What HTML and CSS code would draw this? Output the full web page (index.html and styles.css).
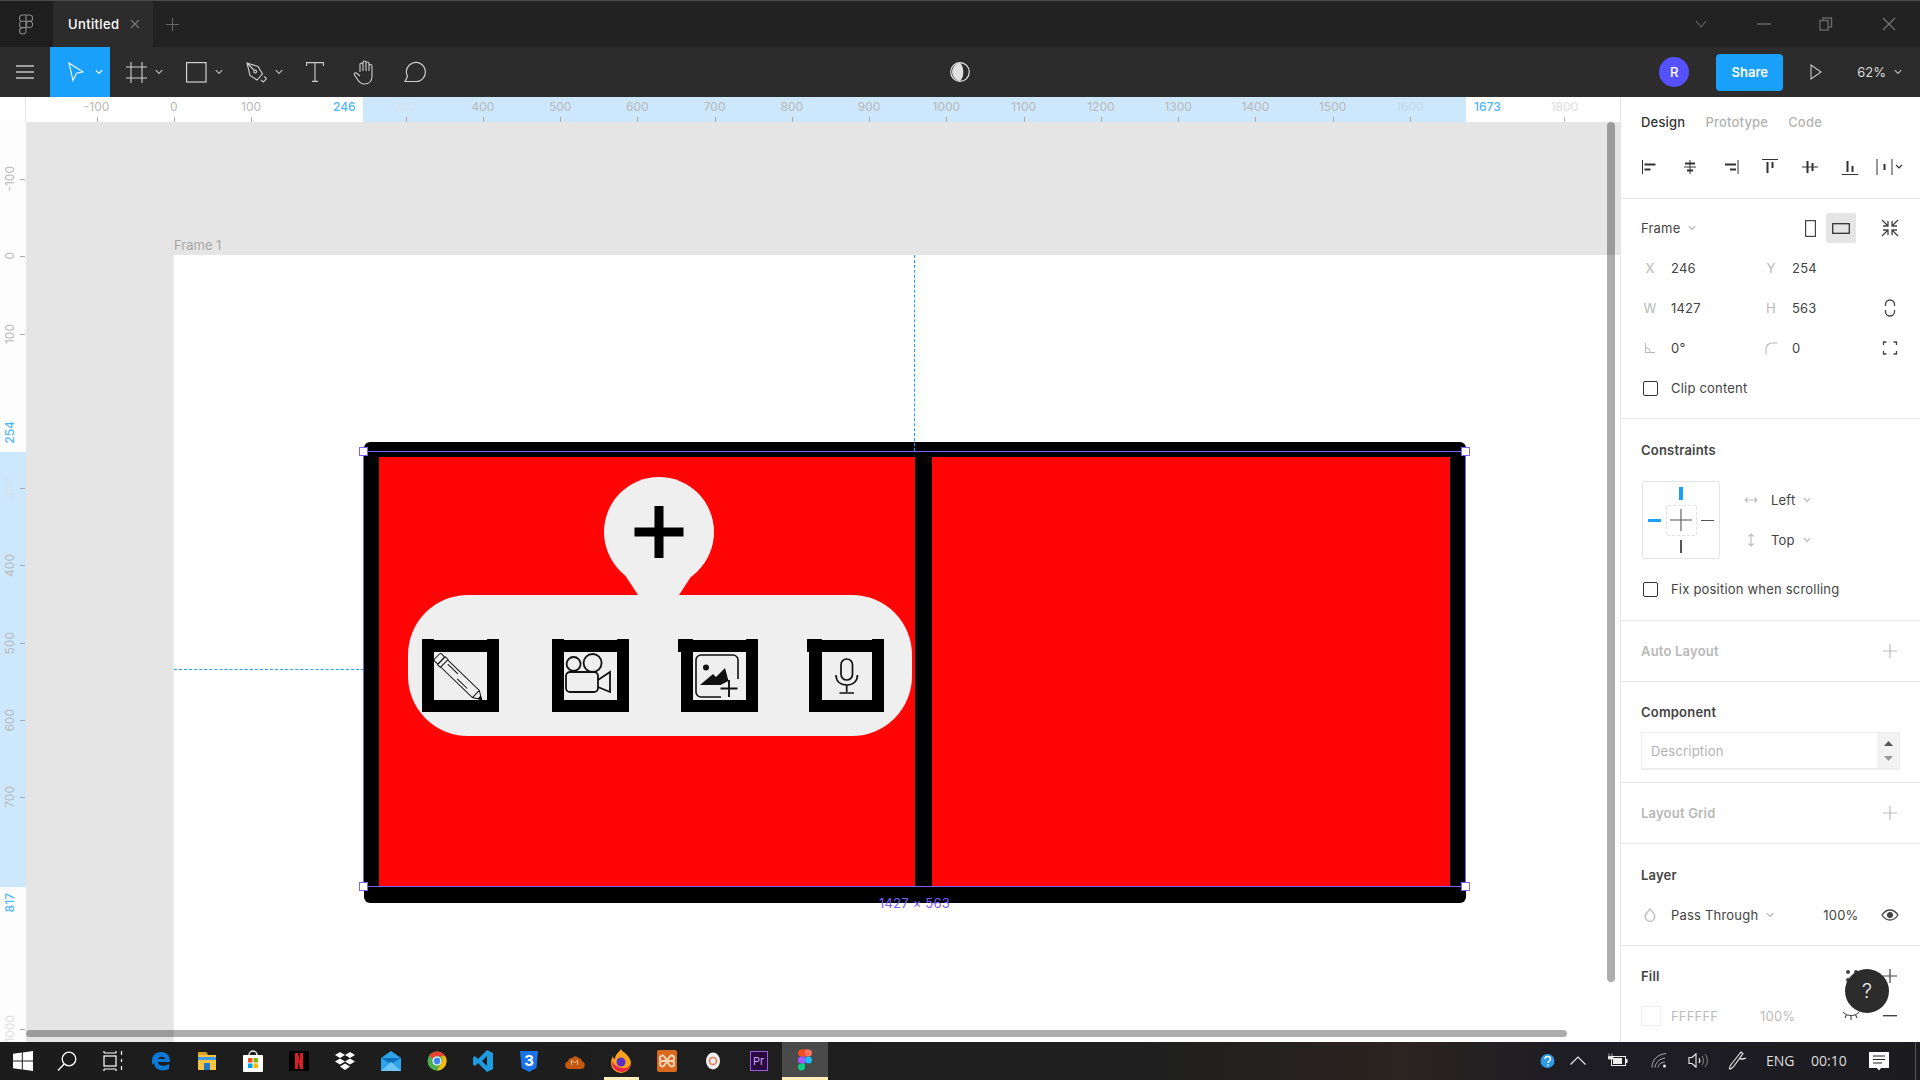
FILE: index.html
```html
<!DOCTYPE html>
<html lang="en">
<head>
  <meta charset="UTF-8">
  <title>Untitled - Figma</title>
  <link rel="stylesheet" href="styles.css">
</head>
<body>

  <svg class="defs" width="0" height="0">
    <symbol id="chev" viewBox="0 0 8 6"><path d="M.8 1.2 4 4.4l3.2-3.2" fill="none" stroke="currentColor" stroke-width="1.1"/></symbol>
    <symbol id="plus" viewBox="0 0 14 14"><path d="M7 0v14M0 7h14" fill="none" stroke="currentColor" stroke-width="1.2"/></symbol>
  </svg>

  <!-- title bar -->
  <div class="titlebar">
    <div class="logo-cell">
      <svg width="14" height="21" viewBox="0 0 14 21" fill="none" stroke="#8a8a8a" stroke-width="1.1"><path d="M7 1H3.6a3.1 3.1 0 0 0 0 6.3H7zM7 1h3.4a3.1 3.1 0 0 1 0 6.3H7zM7 7.3H3.6a3.1 3.1 0 0 0 0 6.3H7zM7 13.6H3.6A3.2 3.2 0 1 0 7 16.8z"/><circle cx="10.4" cy="10.5" r="3.2"/></svg>
    </div>
    <div class="file-tab">
      <span>Untitled</span>
      <svg width="10" height="10" viewBox="0 0 10 10" stroke="#777" stroke-width="1.2"><path d="M1 1l8 8M9 1l-8 8"/></svg>
    </div>
    <div class="new-tab"><svg width="13" height="13" class="plus-dark"><use href="#plus"/></svg></div>
    <div class="window-controls">
      <div><svg width="12" height="8" viewBox="0 0 12 8" fill="none" stroke="#666" stroke-width="1.1"><path d="M1 1l5 6 5-6"/></svg></div>
      <div><svg width="14" height="2"><rect width="14" height="2" fill="#555"/></svg></div>
      <div><svg width="14" height="14" viewBox="0 0 14 14" fill="none" stroke="#666" stroke-width="1.4"><rect x="1" y="3.5" width="8" height="9.5"/><path d="M4 3V1h8.5v9H9"/></svg></div>
      <div><svg width="14" height="14" viewBox="0 0 14 14" stroke="#777" stroke-width="1.1"><path d="M1 1l12 12M13 1L1 13"/></svg></div>
    </div>
  </div>

  <!-- toolbar -->
  <div class="toolbar">
    <div class="tools">
      <div class="tool">
        <svg width="18" height="16" viewBox="0 0 18 16" stroke="#c4c4c4" stroke-width="1.3"><path d="M0 2h18M0 8h18M0 14h18"/></svg>
      </div>
      <div class="tool tool-wide tool-active">
        <svg width="16" height="20" viewBox="0 0 16 20" fill="none" stroke="#fff" stroke-width="1.1"><path d="M1 1l14 9-6.5 1.2L5 18.5z"/></svg>
        <svg class="chev" width="8" height="6"><use href="#chev"/></svg>
      </div>
      <div class="tool tool-wide">
        <svg width="21" height="21" viewBox="0 0 21 21" stroke="#d0d0d0" stroke-width="1.1"><path d="M0 5h21M0 16h21M5 0v21M16 0v21"/></svg>
        <svg class="chev" width="8" height="6"><use href="#chev"/></svg>
      </div>
      <div class="tool tool-wide">
        <svg width="21" height="21" viewBox="0 0 21 21" fill="none" stroke="#d0d0d0" stroke-width="1.2"><rect x=".6" y=".6" width="19.4" height="19.4"/></svg>
        <svg class="chev" width="8" height="6"><use href="#chev"/></svg>
      </div>
      <div class="tool tool-wide">
        <svg width="21" height="21" viewBox="0 0 21 21" fill="none" stroke="#d0d0d0" stroke-width="1.1"><path d="M1 1l11 3.5 4.5 7.5-5.5 6-7-4.5zM1 1l7 7"/><circle cx="9.2" cy="9.5" r="1.4"/><path d="M15 18l2.500 2 3-3.500-2.500-2.200"/></svg>
        <svg class="chev" width="8" height="6"><use href="#chev"/></svg>
      </div>
      <div class="tool">
        <svg width="18" height="20" viewBox="0 0 18 20" fill="none" stroke="#d0d0d0" stroke-width="1.1"><path d="M.6 4V.6h16.800V4M9 .6v18.800M6 19.400h6"/></svg>
      </div>
      <div class="tool">
        <svg width="23" height="25" viewBox="0 0 23 25" fill="none" stroke="#d0d0d0" stroke-width="1.1"><path d="M7 12V4.500a1.500 1.500 0 0 1 3 0V11M10 10V2.500a1.500 1.500 0 0 1 3 0V11M13 10.500V3.500a1.500 1.500 0 0 1 3 0V11M16 11V6a1.500 1.500 0 0 1 3 0v10c0 5-3 8-7.500 8-4 0-5.500-2-7-4.500L1.500 15c-1-2 1-3 2.500-1.500L7 16"/></svg>
      </div>
      <div class="tool">
        <svg width="22" height="22" viewBox="0 0 22 22" fill="none" stroke="#d0d0d0" stroke-width="1.2"><path d="M3.500 15.500A9.500 9.500 0 1 1 12 20.500H1z"/></svg>
      </div>
    </div>
    <div class="contrast">
      <svg width="20" height="20" viewBox="0 0 20 20"><circle cx="10" cy="10" r="9.300" fill="none" stroke="#e6e6e6" stroke-width="1.2"/><path d="M11 .8a9.300 9.300 0 0 0 0 18.400c2.500-2.500 3.300-5.700 3.300-9.200S13.500 3.300 11 .8z" transform="translate(-1 0)" fill="#e0e0e0"/></svg>
    </div>
    <div class="toolbar-right">
      <div class="avatar">R</div>
      <div class="share">Share</div>
      <svg class="play" width="12" height="16" viewBox="0 0 12 16" fill="none" stroke="#c4c4c4" stroke-width="1.1"><path d="M1 1l10 7-10 7z"/></svg>
      <div class="zoom-level">62%</div>
      <svg class="chev zoom-chev" width="8" height="6"><use href="#chev"/></svg>
    </div>
  </div>

  <div class="main">
    <div class="workspace">

      <!-- top ruler -->
      <div class="ruler-top">
        <div class="band-top"></div>
        <div class="corner"></div>
        <div class="tick"><span>-100</span></div>
        <div class="tick"><span>0</span></div>
        <div class="tick"><span>100</span></div>
        <div class="tick no-tick"></div>
        <div class="tick tick-faint"><span>300</span></div>
        <div class="tick"><span>400</span></div>
        <div class="tick"><span>500</span></div>
        <div class="tick"><span>600</span></div>
        <div class="tick"><span>700</span></div>
        <div class="tick"><span>800</span></div>
        <div class="tick"><span>900</span></div>
        <div class="tick"><span>1000</span></div>
        <div class="tick"><span>1100</span></div>
        <div class="tick"><span>1200</span></div>
        <div class="tick"><span>1300</span></div>
        <div class="tick"><span>1400</span></div>
        <div class="tick"><span>1500</span></div>
        <div class="tick tick-faint tick-edge"><span>1600</span></div>
        <div class="tick no-tick"></div>
        <div class="tick tick-pale"><span>1800</span></div>
        <span class="mark mark-x1">246</span>
        <span class="mark mark-x2">1673</span>
      </div>

      <div class="stage">
        <!-- left ruler -->
        <div class="ruler-left">
          <div class="band-left"></div>
          <div class="vtick"><span>-100</span></div>
          <div class="vtick"><span>0</span></div>
          <div class="vtick"><span>100</span></div>
          <div class="vtick no-tick"></div>
          <div class="vtick tick-faint"><span>300</span></div>
          <div class="vtick"><span>400</span></div>
          <div class="vtick"><span>500</span></div>
          <div class="vtick"><span>600</span></div>
          <div class="vtick"><span>700</span></div>
          <div class="vtick no-tick"></div>
          <div class="vtick no-tick"></div>
          <div class="vtick tick-pale"><span>1000</span></div>
          <span class="vmark vmark-1">254</span>
          <span class="vmark vmark-2">817</span>
        </div>

        <div class="canvas">
          <div class="artboard">
            <div class="artboard-name">Frame 1</div>

            <div class="screen">
              <div class="screen-pane">
                <div class="add-menu">
                  <svg class="add-head" width="110" height="119" viewBox="0 0 110 119">
                    <circle cx="55" cy="56" r="55" fill="#efefef"/>
                    <path d="M19 96L34 119H75L90 96z" fill="#efefef"/>
                    <rect x="50.500" y="30" width="9" height="52"/>
                    <rect x="30.500" y="51.500" width="49" height="9"/>
                  </svg>
                  <div class="add-pill">
                    <div class="tile">
                      <svg width="53" height="48" viewBox="0 0 53 48" fill="none" stroke="#111" stroke-width="1">
                        <g transform="translate(3 4.500) rotate(44)">
                          <rect x="0" y="-5" width="6" height="10" rx="1.500"/>
                          <path d="M6-5.500h4v11H6zM10-5h44l8 5-8 5H10zM54-5v10M13-2h14M30 2h14"/>
                          <path d="M59-1.500l3 1.500-3 1.500z" fill="#111"/>
                        </g>
                      </svg>
                    </div>
                    <div class="tile">
                      <svg width="53" height="48" viewBox="0 0 53 48" fill="none" stroke="#111" stroke-width="1.800">
                        <circle cx="9.600" cy="12" r="7"/>
                        <circle cx="28.600" cy="11" r="9"/>
                        <rect x="2" y="20" width="32" height="20" rx="4"/>
                        <path d="M34 28l12-8v20l-12-5"/>
                      </svg>
                    </div>
                    <div class="tile tile-tab">
                      <svg width="53" height="48" viewBox="0 0 53 48" fill="none" stroke="#111" stroke-width="1.600">
                        <path d="M28 45H8a5 5 0 0 1-5-5V8a5 5 0 0 1 5-5h32a5 5 0 0 1 5 5v19"/>
                        <circle cx="13" cy="15.500" r="3" fill="#111" stroke="none"/>
                        <path d="M7 33l13-11 3 3 9-9 3.500 13-8 4H7z" fill="#111" stroke="none"/>
                        <path d="M36 28v17M27.500 36.500h17" stroke-width="1.900"/>
                      </svg>
                    </div>
                    <div class="tile tile-tab tile-last">
                      <svg width="50" height="48" viewBox="0 0 50 48" fill="none" stroke="#111" stroke-width="1.700">
                        <g transform="translate(1.500 0)">
                          <rect x="17.500" y="7" width="11.500" height="21" rx="5.700"/>
                          <path d="M12.500 23c0 6 4 10 10.700 10S34 29 34 23M23.200 33v7M16 41h14.500"/>
                        </g>
                      </svg>
                    </div>
                  </div>
                </div>
              </div>
              <div class="screen-pane screen-pane-right"></div>
            </div>

            <div class="guide-v"></div>
            <div class="guide-h"></div>

            <!-- selection box -->
            <div class="selection">
              <i class="handle handle-tl"></i>
              <i class="handle handle-tr"></i>
              <i class="handle handle-bl"></i>
              <i class="handle handle-br"></i>
            </div>
            <div class="size-label">1427 × 563</div>
          </div>

          <div class="scroll-v"></div>
          <div class="scroll-h"></div>
        </div>
      </div>
    </div>

    <!-- right panel -->
    <div class="panel">
      <div class="section section-head">
        <div class="tabs">
          <span class="tab-on">Design</span>
          <span>Prototype</span>
          <span>Code</span>
        </div>
        <div class="align-row">
          <svg width="30" height="18" viewBox="0 0 30 18" stroke="#333"><path d="M7.500 2v14" /><path d="M9.500 6.500h11M9.500 11.500h6" stroke-width="2"/></svg>
          <svg width="30" height="18" viewBox="0 0 30 18" stroke="#333"><path d="M9 9h12M15 2v14" /><path d="M10 5.500h10M12 12.500h6" stroke-width="2"/></svg>
          <svg width="30" height="18" viewBox="0 0 30 18" stroke="#333"><path d="M23 2v14"/><path d="M10 6.500h11M15 11.500h6" stroke-width="2"/></svg>
          <svg width="30" height="18" viewBox="0 0 30 18" stroke="#333"><path d="M7 1.500h16"/><path d="M12.500 4v11M17.500 4v6" stroke-width="2"/></svg>
          <svg width="30" height="18" viewBox="0 0 30 18" stroke="#333"><path d="M7 9h16"/><path d="M12.500 3v12M17.500 5v8" stroke-width="2"/></svg>
          <svg width="30" height="18" viewBox="0 0 30 18" stroke="#333"><path d="M7 16.500h16"/><path d="M12.500 3v11M17.500 8v6" stroke-width="2"/></svg>
          <svg width="30" height="18" viewBox="0 0 30 18" fill="none" stroke="#333"><path d="M2 1v16M17 1v16"/><path d="M9.500 6v6" stroke-width="2"/><path d="M21 7l3 3 3-3" stroke-width="1.200"/></svg>
        </div>
      </div>

      <div class="section section-frame">
        <div class="row">
          <span class="text">Frame</span>
          <svg class="chev-soft" width="8" height="6"><use href="#chev"/></svg>
          <div class="orient">
            <svg width="11" height="17" viewBox="0 0 11 17" fill="none" stroke="#444" stroke-width="1.200"><rect x=".6" y=".6" width="9.800" height="15.800"/></svg>
            <div class="orient-on"><svg width="18" height="11" viewBox="0 0 18 11" fill="none" stroke="#333" stroke-width="1.300"><rect x=".7" y=".7" width="16.600" height="9.600"/></svg></div>
          </div>
          <svg class="row-end" width="20" height="20" viewBox="0 0 20 20" fill="none" stroke="#444" stroke-width="1.300"><path d="M2 2l5.500 5.500M8 3v5H3M18 2l-5.500 5.500M12 3v5h5M2 18l5.500-5.500M8 17v-5H3M18 18l-5.500-5.500M12 17v-5h5"/></svg>
        </div>
        <div class="row">
          <div class="field"><span class="field-label">X</span><span class="text">246</span></div>
          <div class="field"><span class="field-label">Y</span><span class="text">254</span></div>
        </div>
        <div class="row">
          <div class="field"><span class="field-label">W</span><span class="text">1427</span></div>
          <div class="field"><span class="field-label">H</span><span class="text">563</span></div>
          <svg class="row-end" width="20" height="18" viewBox="0 0 20 18" fill="none" stroke="#444" stroke-width="1.300"><path d="M5.500 7V5.500a4.500 4.500 0 0 1 9 0V7M5.500 11v1.500a4.500 4.500 0 0 0 9 0V11"/></svg>
        </div>
        <div class="row">
          <div class="field"><span class="field-label"><svg width="12" height="12" viewBox="0 0 12 12" fill="none" stroke="#bbb" stroke-width="1.100"><path d="M1.500 1v9.500H11M1.500 5.500c2.500.3 4.500 2.500 4.700 5"/></svg></span><span class="text">0°</span></div>
          <div class="field"><span class="field-label"><svg width="13" height="13" viewBox="0 0 13 13" fill="none" stroke="#bbb" stroke-width="1.100"><path d="M1 12.500V7a6 6 0 0 1 6-6h5.500"/></svg></span><span class="text">0</span></div>
          <svg class="row-end" width="20" height="14" viewBox="0 0 20 14" fill="none" stroke="#444" stroke-width="1.300"><path d="M3.500 4V1h3M13.500 1h3v3M16.500 10v3h-3M6.500 13h-3v-3"/></svg>
        </div>
        <div class="row">
          <i class="check"></i>
          <span class="text">Clip content</span>
        </div>
      </div>

      <div class="section section-constraints">
        <div class="section-title">Constraints</div>
        <div class="constraint-body">
          <div class="constraint-box">
            <i class="cb-inner"></i>
            <i class="cb-line cb-top"></i>
            <i class="cb-line cb-left"></i>
            <i class="cb-line cb-right"></i>
            <i class="cb-line cb-bottom"></i>
            <svg class="cb-cross" width="22" height="22" viewBox="0 0 22 22" stroke="#555" stroke-width="1.100"><path d="M11 0v22M0 11h22"/></svg>
          </div>
          <div class="constraint-opts">
            <div class="opt">
              <svg width="14" height="10" viewBox="0 0 14 10" fill="none" stroke="#bbb" stroke-width="1.100"><path d="M1 5h12M3.500 2.500 1 5l2.500 2.500M10.500 2.500 13 5l-2.500 2.500"/></svg>
              <span class="text">Left</span>
              <svg class="chev-soft" width="8" height="6"><use href="#chev"/></svg>
            </div>
            <div class="opt">
              <svg width="14" height="14" viewBox="0 0 14 14" fill="none" stroke="#bbb" stroke-width="1.100"><path d="M7 1v12M4.500 3.500 7 1l2.500 2.500M4.500 10.500 7 13l2.500-2.500"/></svg>
              <span class="text">Top</span>
              <svg class="chev-soft" width="8" height="6"><use href="#chev"/></svg>
            </div>
          </div>
        </div>
        <div class="row fix-row">
          <i class="check"></i>
          <span class="text">Fix position when scrolling</span>
        </div>
      </div>

      <div class="section section-bar">
        <span class="section-title title-off">Auto Layout</span>
        <svg class="row-end plus-off" width="14" height="14"><use href="#plus"/></svg>
      </div>

      <div class="section section-component">
        <div class="section-title">Component</div>
        <div class="desc-box">
          <span>Description</span>
          <div class="spinner">
            <svg width="9" height="5" viewBox="0 0 9 5"><path d="M0 5L4.500 0 9 5z" fill="#555"/></svg>
            <svg width="9" height="5" viewBox="0 0 9 5"><path d="M0 0L4.500 5 9 0z" fill="#999"/></svg>
          </div>
        </div>
      </div>

      <div class="section section-bar">
        <span class="section-title title-off">Layout Grid</span>
        <svg class="row-end plus-off" width="14" height="14"><use href="#plus"/></svg>
      </div>

      <div class="section section-layer">
        <div class="section-title">Layer</div>
        <div class="row layer-row">
          <span class="field-label"><svg width="12" height="14" viewBox="0 0 12 14" fill="none" stroke="#bbb" stroke-width="1.300"><path d="M6 1c2 2.500 4.800 4.500 4.800 7.500a4.800 4.800 0 0 1-9.600 0C1.200 5.500 4 3.500 6 1z"/></svg></span>
          <span class="text">Pass Through</span>
          <svg class="chev-soft" width="8" height="6"><use href="#chev"/></svg>
          <span class="text layer-pct">100%</span>
          <svg class="row-end" width="18" height="12" viewBox="0 0 18 12" fill="none" stroke="#444" stroke-width="1.300"><path d="M1 6c2-3 5-5 8-5s6 2 8 5c-2 3-5 5-8 5S3 9 1 6z"/><circle cx="9" cy="6" r="2.400" fill="#444"/></svg>
        </div>
      </div>

      <div class="section section-fill">
        <div class="fill-title">
          <span class="section-title">Fill</span>
          <svg class="style-dots" width="14" height="14" viewBox="0 0 14 14" fill="#444"><circle cx="3" cy="3" r="2"/><circle cx="11" cy="3" r="2"/><circle cx="3" cy="11" r="2"/><circle cx="11" cy="11" r="2"/></svg>
          <svg class="row-end plus-on" width="14" height="14"><use href="#plus"/></svg>
        </div>
        <div class="row fill-row">
          <i class="swatch"></i>
          <span class="text text-off fill-hex">FFFFFF</span>
          <span class="text text-off">100%</span>
          <svg class="lash" width="18" height="10" viewBox="0 0 18 10" fill="none" stroke="#444" stroke-width="1.100"><path d="M1 1c2 2.500 5 3.500 8 3.500s6-1 8-3.500M4.500 3.500 3 7M9 4.500V9M13.500 3.500 15 7"/></svg>
          <svg class="row-end" width="14" height="2"><rect width="14" height="1.400" fill="#444"/></svg>
        </div>
      </div>

      <div class="help">?</div>
    </div>
  </div>

  <!-- windows taskbar -->
  <div class="taskbar">
    <div class="task-cell task-sys"><svg width="20" height="20" viewBox="0 0 20 20" fill="#fff"><path d="M0 2.800l8.800-1.200v8H0zM9.800 1.400 20 0v9.600H9.800zM0 10.600h8.800v7.900L0 17.300zM9.800 10.600H20V20l-10.200-1.400z"/></svg></div>
    <div class="task-cell task-sys"><svg width="20" height="20" viewBox="0 0 20 20" fill="none" stroke="#fff" stroke-width="1.300"><circle cx="12" cy="8" r="6.800"/><path d="M7.200 13 1 19.500"/></svg></div>
    <div class="task-cell task-sys"><svg width="20" height="20" viewBox="0 0 20 20" fill="none" stroke="#fff" stroke-width="1.200"><rect x="1" y="5" width="12" height="10"/><path d="M1 2h12M1 18h12M1 0v2M13 0v2M1 18v2M13 18v2M18.500 0v4M18.500 8v3M18.500 15v4"/></svg></div>
    <div class="task-cell task-first"><svg width="20" height="20" viewBox="0 0 20 20"><path d="M1 10C1 4 5 1 10 1c6 0 9 4 9 10H7c0 4 6 5 11 2v5c-6 3-15 1-15-6-2 2-2 3-2-2z" fill="#0d78d6"/><path d="M7 8h7c0-3-6-3-7 0z" fill="#202020"/></svg></div>
    <div class="task-cell"><svg width="20" height="20" viewBox="0 0 20 20"><path d="M1 1h8l2 3h8v15H1z" fill="#f6c343"/><path d="M1 1h8l2 3H1z" fill="#d9a128"/><rect x="1" y="6" width="18" height="3" fill="#3d9ae8"/><rect x="7" y="12" width="6" height="7" fill="#2478c8"/></svg></div>
    <div class="task-cell"><svg width="20" height="22" viewBox="0 0 20 22"><path d="M6 5a4 4 0 0 1 8 0" fill="none" stroke="#eee" stroke-width="1.400"/><rect y="5" width="20" height="17" rx="1" fill="#fff"/><rect x="5" y="8" width="4.500" height="4.500" fill="#f25022"/><rect x="10.500" y="8" width="4.500" height="4.500" fill="#7fba00"/><rect x="5" y="13.500" width="4.500" height="4.500" fill="#00a4ef"/><rect x="10.500" y="13.500" width="4.500" height="4.500" fill="#ffb900"/></svg></div>
    <div class="task-cell"><svg width="20" height="20" viewBox="0 0 20 20"><rect width="20" height="20" fill="#000"/><path d="M6 2h3l2 8V2h3v16h-3L9 10v8H6z" fill="#d81f26"/></svg></div>
    <div class="task-cell"><svg width="20" height="18" viewBox="0 0 20 18" fill="#fff"><path d="M5 0l5 3-5 3-5-3zM15 0l5 3-5 3-5-3zM5 6.500l5 3-5 3-5-3zM15 6.500l5 3-5 3-5-3zM10 11.500l5 3-5 3.500-5-3.500z"/></svg></div>
    <div class="task-cell"><svg width="20" height="20" viewBox="0 0 20 20"><path d="M0 7 10 0l10 7v13H0z" fill="#2ba4ea"/><path d="M0 7h20L10 13z" fill="#0f6fb8"/><path d="M0 20 10 11l10 9z" fill="#6cc6f5"/></svg></div>
    <div class="task-cell"><svg width="20" height="20" viewBox="0 0 20 20"><circle cx="10" cy="10" r="9.500" fill="#4caf50"/><path d="M10 .5a9.500 9.500 0 0 1 8.300 4.800H10a4.800 4.800 0 0 0-4.500 3L2.600 4A9.500 9.500 0 0 1 10 .5z" fill="#ea4335"/><path d="M18.300 5.300A9.500 9.500 0 0 1 10 19.500l4.200-7.200A4.800 4.800 0 0 0 14 5.300z" fill="#fbbc05"/><circle cx="10" cy="10" r="4" fill="#4285f4" stroke="#fff" stroke-width="1.200"/></svg></div>
    <div class="task-cell"><svg width="20" height="22" viewBox="0 0 20 22"><path d="M14 0l6 3v16l-6 3L5 13l-3 3-2-1.500V7.500L2 6l3 3zM14 6l-5 5 5 5z" fill="#1f9ce0"/></svg></div>
    <div class="task-cell"><svg width="18" height="21" viewBox="0 0 18 21"><path d="M0 0h18l-1.600 17L9 21l-7.400-4z" fill="#1b73e8"/><text x="9" y="15" class="css-three">3</text></svg></div>
    <div class="task-cell"><svg width="20" height="16" viewBox="0 0 20 16"><path d="M4 16a4 4 0 0 1-1-7.800 4 4 0 0 1 4-3.200 4 4 0 0 1 6.500 0 4 4 0 0 1 3.500 3.200A4 4 0 0 1 16 16z" fill="#c4580f"/><path d="M6.500 12V7l3 3 3-3v5" fill="none" stroke="#f0c090" stroke-width="1"/></svg></div>
    <div class="task-cell"><svg width="20" height="24" viewBox="0 0 20 24"><path d="M10 0c1 3 4 3 6 6 3 3 4 6 4 8a10 10 0 0 1-20 0c0-3 1-5 2-7 0 2 1 3 2 3 0-4 3-6 6-10z" fill="#f9a21a"/><path d="M10 23a10 10 0 0 0 10-9c-2 5-6 6-10 5S3 16 1 12a10 10 0 0 0 9 11z" fill="#e8244a"/><circle cx="10" cy="13" r="4.500" fill="#5a2fc2"/></svg></div>
    <div class="task-cell"><svg width="20" height="22" viewBox="0 0 20 22"><rect width="20" height="22" rx="2" fill="#d9691f"/><path d="M10 11C8 7 7 5.500 5.500 5.500a2.500 2.500 0 0 0 0 5.500zM10 11c2-4 3-5.500 4.500-5.500a2.500 2.500 0 0 1 0 5.500zM10 11c-2 4-3 5.500-4.500 5.500a2.500 2.500 0 0 1 0-5.500zM10 11c2 4 3 5.500 4.500 5.500a2.500 2.500 0 0 0 0-5.500z" fill="none" stroke="#f6d9b8" stroke-width="1.800"/></svg></div>
    <div class="task-cell"><svg width="14" height="18" viewBox="0 0 14 18"><ellipse cx="7" cy="9" rx="7" ry="8.500" fill="#eee"/><circle cx="7" cy="9" r="3.500" fill="none" stroke="#e77a50" stroke-width="1.600"/></svg></div>
    <div class="task-cell"><svg width="18" height="20" viewBox="0 0 18 20"><rect width="18" height="20" fill="#2a0a3d"/><rect x=".5" y=".5" width="17" height="19" fill="none" stroke="#9a5be0"/><text x="3" y="14" class="pr-label">Pr</text></svg></div>
    <div class="task-cell task-figma"><svg width="14" height="24" viewBox="0 0 14 21"><path d="M7 0H3.500a3.500 3.500 0 0 0 0 7H7z" fill="#f24e1e"/><path d="M7 0h3.500a3.500 3.500 0 0 1 0 7H7z" fill="#ff7262"/><path d="M7 7H3.500a3.500 3.500 0 0 0 0 7H7z" fill="#a259ff"/><circle cx="10.500" cy="10.500" r="3.500" fill="#1abcfe"/><path d="M7 14H3.500A3.500 3.500 0 1 0 7 17.500z" fill="#0acf83"/></svg></div>
    <i class="task-line task-line-fox"></i>

    <div class="tray">
      <svg class="tray-help" width="16" height="16" viewBox="0 0 16 16"><circle cx="7.500" cy="8" r="7" fill="#2e9be6"/><path d="M5 6c0-3.500 5.500-3.500 5.500 0 0 2-2.500 2-2.500 4M8 11.500v1.500" fill="none" stroke="#fff" stroke-width="1.500"/></svg>
      <svg class="tray-up" width="16" height="9" viewBox="0 0 16 9" fill="none" stroke="#eee" stroke-width="1.100"><path d="M.5 8.500 8 1l7.500 7.500"/></svg>
      <svg class="tray-battery" width="20" height="13" viewBox="0 0 20 13"><path d="M1 .5v3M4 .5v3M0 3.500h5v2.500H0z" fill="#eee" stroke="#eee" stroke-width=".7"/><rect x="3.500" y="3.500" width="14" height="9" fill="none" stroke="#eee"/><rect x="5" y="5" width="9" height="6" fill="#eee"/><rect x="18" y="6" width="1.500" height="4" fill="#eee"/></svg>
      <svg class="tray-wifi" width="16" height="15" viewBox="0 0 16 15" fill="none" stroke="#aaa" stroke-width="1"><path d="M1 14.500C1 7 6 1.500 15 .5M4 14.500c.3-4.500 4-8.500 10-9.500M7 14.500c.3-2.500 2.500-5 7-5.500"/><circle cx="13.500" cy="13" r="1.500" fill="#eee" stroke="none"/></svg>
      <svg class="tray-sound" width="20" height="15" viewBox="0 0 20 15" fill="none" stroke="#eee" stroke-width="1.100"><path d="M1 4.500h3L8 .8v13.400l-4-3.700H1z"/><path d="M11 5c1 1.500 1 3.500 0 5"/><path d="M14 3c2 3 2 6 0 9M17 1c3 4 3 9 0 13" stroke="#777"/></svg>
      <svg class="tray-pen" width="20" height="20" viewBox="0 0 20 20" fill="none" stroke="#eee" stroke-width="1.100"><path d="M13 1l2 1.500L6 15c-1 1.500-4 3.500-4.500 3s.8-3.500 2-5zM11 7c2 1.500 3 2 7 0-2 1-4 1-6 .5"/></svg>
      <span class="tray-text tray-lang">ENG</span>
      <span class="tray-text tray-time">00:10</span>
      <svg class="tray-note" width="20" height="19" viewBox="0 0 20 19"><path d="M0 0h20v16h-8l-2 2.500L8 16H0z" fill="#fff"/><path d="M4 4h12M4 7.500h12M4 11h9" stroke="#222"/></svg>
      <i class="tray-edge"></i>
    </div>
  </div>

</body>
</html>
```

FILE: styles.css
```css
* {
  box-sizing: border-box;
}

html, body {
  margin: 0;
  height: 100%;
}

body {
  width: 1920px;
  height: 1080px;
  overflow: hidden;
  display: flex;
  flex-direction: column;
  font-family: 'Inter', 'Liberation Sans', sans-serif;
  font-size: 13px;
  color: #444;
  background-color: #fff;
}

svg {
  display: block;
  flex: none;
}

i {
  display: block;
}

.defs {
  position: absolute;
}

/* title bar */
.titlebar {
  height: 47px;
  flex: none;
  display: flex;
  background-color: #222;
  border-top: 1px solid #4a4a4a;
}

.logo-cell {
  width: 53px;
  display: flex;
  align-items: center;
  justify-content: center;
  padding-right: 2px;
  background-color: #1e1e1e;
}

.file-tab {
  width: 100px;
  display: flex;
  align-items: center;
  padding-left: 15px;
  gap: 11px;
  background-color: #2c2c2c;
  color: #fff;
  font-weight: 500;
  letter-spacing: 0.35px;
}

.new-tab {
  width: 38px;
  display: flex;
  align-items: center;
  justify-content: center;
}

.plus-dark {
  color: #666;
}

.window-controls {
  margin-left: auto;
  width: 250px;
  display: flex;
}

.window-controls div {
  flex: 1;
  display: flex;
  align-items: center;
  justify-content: center;
}

/* toolbar */
.toolbar {
  height: 50px;
  flex: none;
  display: grid;
  grid-template-columns: 1fr auto 1fr;
  background-color: #2c2c2c;
}

.tools {
  display: flex;
}

.tool {
  width: 50px;
  display: flex;
  align-items: center;
  justify-content: center;
  padding-right: 1px;
}

.tool-wide {
  width: 60px;
  justify-content: flex-start;
  padding: 0 0 0 16px;
  position: relative;
  color: #bbb;
}

.tool-active {
  background-color: #18a0fb;
  color: #fff;
  padding-left: 18px;
}

.chev {
  position: absolute;
  left: 45px;
  top: 22px;
}

.contrast {
  display: flex;
  align-items: center;
}

.toolbar-right {
  display: flex;
  align-items: center;
  justify-content: flex-end;
  padding-right: 18px;
}

.avatar {
  width: 30px;
  height: 30px;
  border-radius: 50%;
  background-color: #5551ff;
  color: #fff;
  font-weight: 500;
  display: flex;
  align-items: center;
  justify-content: center;
}

.share {
  margin-left: 27px;
  width: 67px;
  height: 37px;
  border-radius: 4px;
  background-color: #18a0fb;
  color: #fff;
  font-weight: 600;
  display: flex;
  align-items: center;
  justify-content: center;
}

.play {
  margin-left: 27px;
}

.zoom-level {
  margin-left: 35px;
  color: #ddd;
}

.zoom-chev {
  position: static;
  margin-left: 8px;
  color: #bbb;
}

/* main area */
.main {
  flex: 1;
  min-height: 0;
  display: flex;
}

.workspace {
  flex: 1;
  min-width: 0;
  display: flex;
  flex-direction: column;
}

/* rulers */
.ruler-top {
  height: 25px;
  flex: none;
  display: flex;
  position: relative;
  padding-left: 58px;
  background-color: #fff;
  font-size: 12px;
  color: #b8b8b8;
}

.corner {
  position: absolute;
  left: 25px;
  top: 0;
  width: 1px;
  height: 25px;
  background-color: #e5e5e5;
}

.band-top {
  position: absolute;
  left: 363px;
  top: 0;
  width: 1103px;
  height: 25px;
  background-color: #cde8fd;
}

.tick {
  width: 77.25px;
  flex: none;
  position: relative;
  text-align: center;
  padding-top: 2px;
  line-height: 15px;
}

.tick::after {
  content: "";
  position: absolute;
  left: 50%;
  bottom: 0;
  width: 1px;
  height: 5px;
  background-color: #aaa;
}

.no-tick::after {
  display: none;
}

.tick-faint {
  color: #d4e2ec;
}

.tick-edge {
  color: #c4d8e6;
}

.tick-pale {
  color: #ddd;
}

.tick-pale::after {
  background-color: #bbb;
}

.mark {
  position: absolute;
  top: 2px;
  line-height: 15px;
  font-weight: 500;
  color: #4fb6fd;
}

.mark-x1 {
  left: 333px;
}

.mark-x2 {
  left: 1474px;
}

.stage {
  flex: 1;
  min-height: 0;
  display: flex;
}

.ruler-left {
  width: 26px;
  flex: none;
  position: relative;
  padding-top: 18.3px;
  overflow: hidden;
  background-color: #fdfdfd;
  font-size: 12px;
  color: #b8b8b8;
}

.band-left {
  position: absolute;
  left: 0;
  top: 330px;
  width: 26px;
  height: 435px;
  background-color: #cde8fd;
}

.vtick {
  height: 77.3px;
  position: relative;
  display: flex;
  align-items: center;
  padding-left: 2px;
}

.vtick span,
.vmark {
  writing-mode: vertical-rl;
  transform: rotate(180deg);
  line-height: 15px;
}

.vtick::after {
  content: "";
  position: absolute;
  right: 1px;
  top: 50%;
  width: 5px;
  height: 1px;
  background-color: #aaa;
}

.vmark {
  position: absolute;
  left: 2px;
  font-weight: 500;
  color: #4fb6fd;
}

.vmark-1 {
  top: 299px;
}

.vmark-2 {
  top: 771px;
}

/* canvas */
.canvas {
  flex: 1;
  min-width: 0;
  position: relative;
  overflow: hidden;
  background-color: #e5e5e5;
}

.artboard {
  position: absolute;
  left: 148px;
  top: 133px;
  right: 0;
  bottom: 0;
  background-color: #fff;
  box-shadow: -1px 0 0 #eee;
}

.artboard-name {
  position: absolute;
  left: 0;
  top: -18px;
  line-height: 16px;
  color: #a6a6a6;
}

.guide-v {
  position: absolute;
  left: 740px;
  top: 0;
  height: 196px;
  border-left: 1px dashed #18a0fb;
}

.guide-h {
  position: absolute;
  left: 0;
  top: 414px;
  width: 190px;
  border-top: 1px dashed #18a0fb;
}

.screen {
  position: absolute;
  left: 190px;
  top: 187px;
  width: 1102px;
  height: 461px;
  padding: 15px 16px 16px 15px;
  display: flex;
  gap: 17px;
  border-radius: 6px;
  background-color: #000;
}

.screen-pane {
  width: 536px;
  background-color: #ff0505;
}

.screen-pane-right {
  flex: 1;
}

.add-menu {
  display: flex;
  flex-direction: column;
  align-items: center;
  width: 504px;
  margin: 19px 0 0 29px;
}

.add-head {
  margin-right: 3px;
}

.add-pill {
  width: 100%;
  height: 141px;
  display: flex;
  gap: 52.5px;
  padding: 44px 0 0 14px;
  border-radius: 60px;
  background-color: #efefef;
}

.tile {
  position: relative;
  width: 77px;
  height: 73px;
  border: solid #000;
  border-width: 13px 12px 12px 12px;
}

/* the top edge sits a little lower between the two corners */
.tile::after {
  content: "";
  position: absolute;
  left: 0;
  right: 0;
  top: -13px;
  height: 1px;
  background-color: #efefef;
}

.tile-tab::before {
  content: "";
  position: absolute;
  left: -15px;
  top: -13px;
  width: 3px;
  height: 13px;
  background-color: #000;
}

.tile-last {
  width: 75px;
  margin-left: -2px;
  border-left-width: 13px;
}

/* selection */
.selection {
  position: absolute;
  left: 189px;
  top: 196px;
  width: 1103px;
  height: 436px;
  border: 1px solid #7b61ff;
}

.handle {
  position: absolute;
  width: 9px;
  height: 9px;
  border: 1px solid #7b61ff;
  background-color: #fff;
}

.handle-tl { left: -5px; top: -5px; }
.handle-tr { right: -5px; top: -5px; }
.handle-bl { left: -5px; bottom: -5px; }
.handle-br { right: -5px; bottom: -5px; }

.size-label {
  position: absolute;
  left: 705px;
  top: 640px;
  line-height: 16px;
  font-size: 13px;
  letter-spacing: 0.2px;
  color: #7b61ff;
}

.scroll-v {
  position: absolute;
  left: 1581px;
  top: 0;
  width: 8px;
  height: 860px;
  border-radius: 4px;
  background-color: rgba(0, 0, 0, 0.32);
}

.scroll-h {
  position: absolute;
  left: 0;
  top: 908px;
  width: 1541px;
  height: 7px;
  border-radius: 4px;
  background-color: rgba(0, 0, 0, 0.32);
}

/* right panel */
.panel {
  width: 300px;
  flex: none;
  position: relative;
  overflow: hidden;
  border-left: 1px solid #e5e5e5;
  background-color: #fff;
  letter-spacing: 0.2px;
}

.section {
  padding: 0 20px;
  border-bottom: 1px solid #e8e8e8;
}

.section-head {
  height: 102px;
}

.tabs {
  display: flex;
  gap: 20px;
  height: 50px;
  align-items: center;
  color: #b3b3b3;
  font-weight: 500;
}

.tab-on {
  color: #333;
}

.align-row {
  display: flex;
  gap: 10px;
  margin-left: -6px;
  height: 40px;
  align-items: center;
}

.section-frame {
  height: 220px;
  padding-top: 9px;
}

.row {
  height: 40px;
  display: flex;
  align-items: center;
  position: relative;
}

.text {
  color: #444;
}

.text-off {
  color: #bbb;
}

.chev-soft {
  margin-left: 8px;
  color: #b3b3b3;
}

.orient {
  position: absolute;
  left: 164px;
  top: 5px;
  display: flex;
  align-items: center;
  gap: 10px;
}

.orient-on {
  width: 30px;
  height: 30px;
  display: flex;
  align-items: center;
  justify-content: center;
  background-color: #e5e5e5;
  border-radius: 2px;
}

.row-end {
  position: absolute;
  right: 0;
}

.field {
  width: 121px;
  display: flex;
  align-items: center;
}

.field-label {
  width: 18px;
  margin-right: 12px;
  display: flex;
  justify-content: center;
  color: #b8b8b8;
}

.check {
  width: 15px;
  height: 15px;
  margin: 0 13px 0 2px;
  border: 1.4px solid #333;
  border-radius: 2px;
}

.section-constraints {
  height: 202px;
}

.section-title {
  font-weight: 600;
  color: #444;
}

.section-constraints .section-title {
  height: 62px;
  line-height: 62px;
}

.constraint-body {
  display: flex;
}

.constraint-box {
  position: relative;
  width: 78px;
  height: 78px;
  margin-left: 1px;
  border: 1px solid #e5e5e5;
  border-radius: 2px;
}

.cb-inner {
  position: absolute;
  left: 23px;
  top: 23px;
  width: 31px;
  height: 31px;
  border: 1px dashed #e0e0e0;
  border-radius: 2px;
}

.cb-cross {
  position: absolute;
  left: 27px;
  top: 27px;
}

.cb-line {
  position: absolute;
  background-color: #555;
}

.cb-top {
  left: 36px;
  top: 5px;
  width: 4px;
  height: 13px;
  background-color: #18a0fb;
}

.cb-bottom {
  left: 37px;
  top: 58px;
  width: 2px;
  height: 13px;
}

.cb-left {
  left: 5px;
  top: 37px;
  width: 13px;
  height: 3px;
  background-color: #18a0fb;
}

.cb-right {
  left: 58px;
  top: 38px;
  width: 13px;
  height: 1px;
}

.constraint-opts {
  margin-left: 24px;
  margin-top: -1px;
}

.opt {
  height: 40px;
  display: flex;
  align-items: center;
}

.opt .text {
  margin-left: 13px;
}

.fix-row {
  margin-top: 9px;
}

.section-bar {
  height: 61px;
  display: flex;
  align-items: center;
  position: relative;
}

.section-bar .row-end {
  right: 23px;
}

.title-off {
  color: #b8b8b8;
}

.plus-off {
  color: #bbb;
}

.plus-on {
  color: #444;
}

.section-component {
  height: 101px;
}

.section-component .section-title {
  height: 50px;
  line-height: 60px;
}

.desc-box {
  height: 38px;
  display: flex;
  align-items: center;
  justify-content: space-between;
  padding-left: 9px;
  border: 1px solid #eee;
  border-bottom-width: 2px;
  color: #b3b3b3;
}

.spinner {
  width: 22px;
  height: 100%;
  display: flex;
  flex-direction: column;
  align-items: center;
  justify-content: center;
  gap: 10px;
  background-color: #f2f2f2;
}

.section-layer {
  height: 102px;
}

.section-layer .section-title {
  height: 50px;
  line-height: 62px;
}

.layer-row {
  margin-top: 1px;
}

.layer-pct {
  margin-left: 49px;
}

.section-fill {
  border-bottom: none;
}

.fill-title {
  position: relative;
  height: 60px;
  display: flex;
  align-items: center;
}

.style-dots {
  position: absolute;
  left: 204px;
}

.fill-title .row-end,
.fill-row .row-end {
  right: 3px;
}

.layer-row .row-end {
  right: 1px;
}

.fill-row {
  margin-top: -10px;
}

.swatch {
  width: 20px;
  height: 20px;
  margin-right: 10px;
  border: 1px solid #eee;
}

.fill-hex {
  width: 89px;
}

.lash {
  position: absolute;
  left: 201px;
}

.help {
  position: absolute;
  left: 224px;
  top: 872px;
  width: 44px;
  height: 44px;
  border-radius: 50%;
  background-color: #2c2c2c;
  color: #eee;
  font-size: 20px;
  font-weight: 300;
  display: flex;
  align-items: center;
  justify-content: center;
}

/* taskbar */
.taskbar {
  height: 38px;
  flex: none;
  display: flex;
  position: relative;
  background: linear-gradient(90deg, #1c1c1c 0, #1f1f1f 1150px, #2b2420 1400px, #1e1d24 1560px, #1c1c20 1920px);
}

.task-cell {
  width: 46px;
  height: 38px;
  flex: none;
  display: flex;
  align-items: center;
  justify-content: center;
}

.task-sys {
  width: 45px;
}

.task-sys:nth-child(2) {
  padding-right: 2px;
}

.task-first {
  margin-left: 3px;
}

.task-figma {
  background-color: #4a4a4a;
  border-bottom: 3px solid #ffeebc;
}

.task-line {
  position: absolute;
  bottom: 0;
  height: 3px;
  background-color: #ffeebc;
}

.task-line-fox {
  left: 604px;
  width: 35px;
}

.css-three {
  font-size: 15px;
  font-weight: 700;
  fill: #fff;
  text-anchor: middle;
}

.pr-label {
  font-size: 11px;
  fill: #c9a0ff;
}

.tray {
  position: absolute;
  left: 1540px;
  top: 0;
  right: 0;
  bottom: 0;
  color: #ddd;
}

.tray > * {
  position: absolute;
  top: 11px;
}

.tray-help { left: 0; }
.tray-up { left: 30px; top: 14px; }
.tray-battery { left: 68px; top: 11px; }
.tray-wifi { left: 111px; }
.tray-sound { left: 148px; }
.tray-pen { left: 188px; top: 9px; }
.tray-note { left: 329px; top: 10px; }

.tray-text {
  font-family: 'Open Sans', 'Liberation Sans', sans-serif;
  font-size: 14px;
  top: 9px;
  line-height: 20px;
}

.tray-lang { left: 226px; }
.tray-time { left: 271px; }

.tray-edge {
  left: 375px;
  top: 0;
  width: 1px;
  height: 38px;
  background-color: #555;
}
```
